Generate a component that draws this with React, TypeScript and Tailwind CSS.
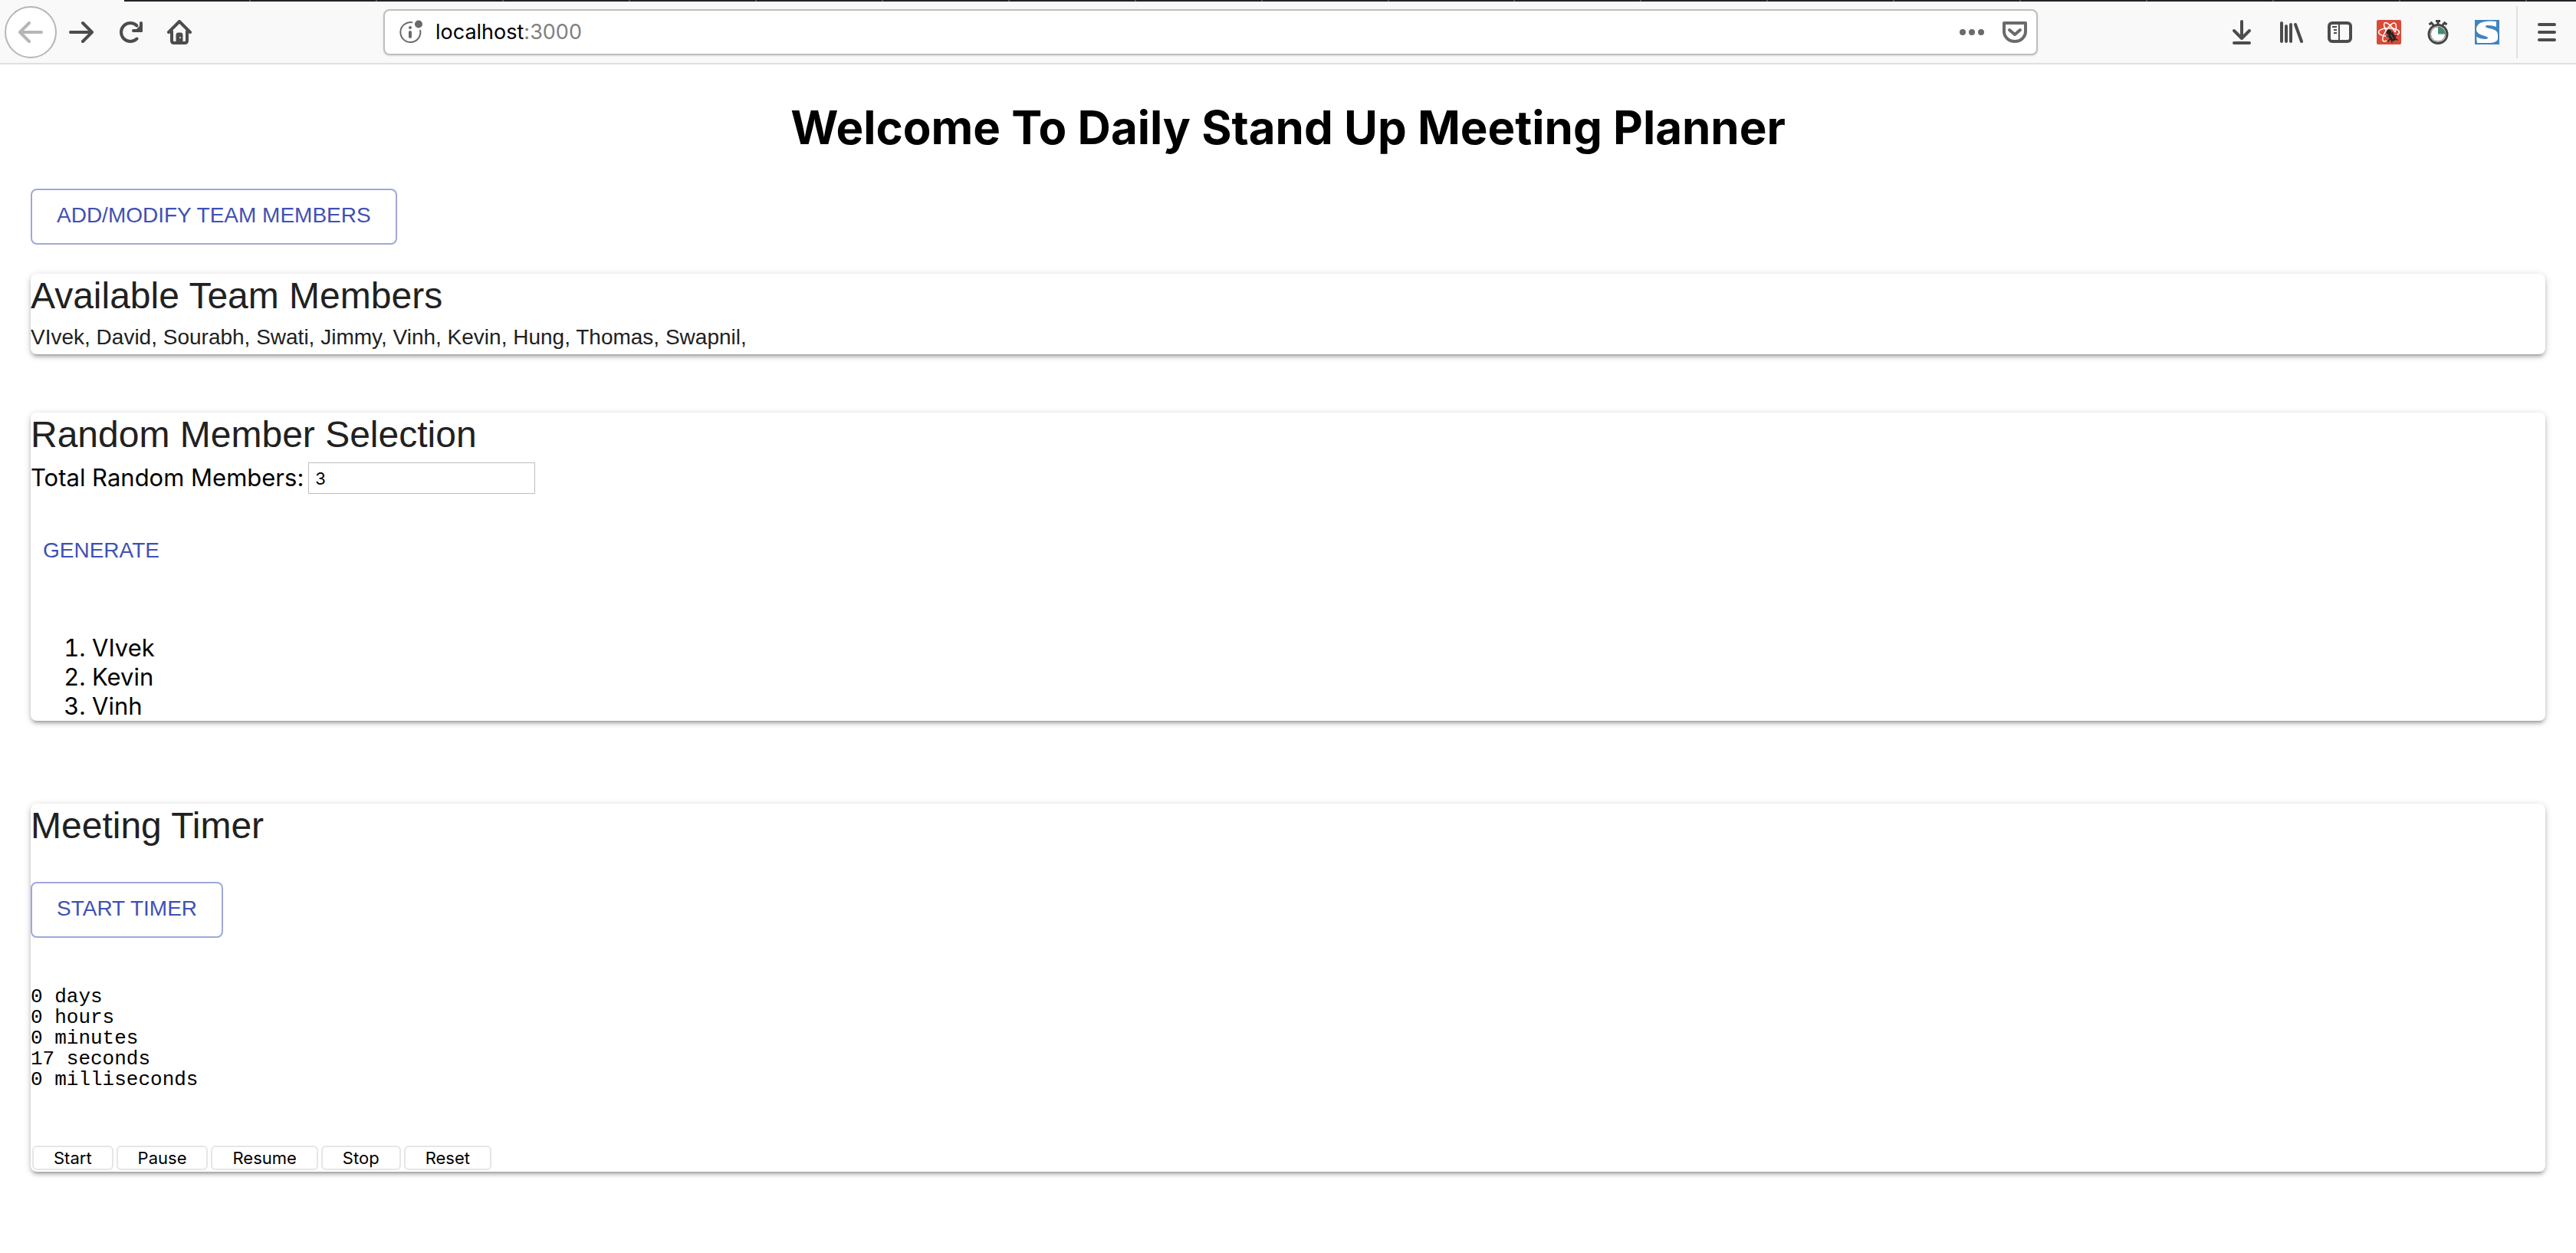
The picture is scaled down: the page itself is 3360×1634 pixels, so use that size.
import React from "react";

const card =
  "rounded-lg bg-white shadow-[0_2px_10px_rgba(0,0,0,0.2),0_4px_4px_rgba(0,0,0,0.14),0_6px_2px_-4px_rgba(0,0,0,0.12)]";
const outlined =
  "flex h-[73px] items-center rounded-lg border-2 border-[#9fa8da] px-8 pb-1 font-['Liberation_Sans',Arial,sans-serif] text-[28px] text-[#3f51b5]";
const title =
  "pb-1.5 font-['Liberation_Sans',Arial,sans-serif] text-[48px] leading-[58px] text-[#212121]";

function BackIcon() {
  return (
    <svg className="size-8" viewBox="0 0 32 32" fill="none" stroke="#b6b6b6" strokeWidth="4" strokeLinecap="round" strokeLinejoin="round">
      <path d="M30 16H3M14 4 2 16l12 12" />
    </svg>
  );
}
function ForwardIcon() {
  return (
    <svg className="size-8" viewBox="0 0 32 32" fill="none" stroke="#4c4c4d" strokeWidth="4" strokeLinecap="round" strokeLinejoin="round">
      <path d="M2 16h27M18 4l12 12-12 12" />
    </svg>
  );
}
function ReloadIcon() {
  return (
    <svg className="size-8" viewBox="0 0 32 32">
      <path d="M24.500 24.500A12 12 0 1 1 24.500 7.500" fill="none" stroke="#4c4c4d" strokeWidth="4" strokeLinecap="round" />
      <path d="M32 4v11q0 1-1 1H20a2 2 0 0 1 0-4h4l4-4V4a2 2 0 0 1 4 0z" fill="#4c4c4d" />
    </svg>
  );
}
function HomeIcon() {
  return (
    <svg className="size-8" viewBox="0 0 32 32" fill="none" stroke="#4c4c4d" strokeLinecap="round" strokeLinejoin="round">
      <path d="M2 16 16 2l14 14" strokeWidth="4" />
      <path d="M6 15v12q0 3 3 3h14q3 0 3-3V15" strokeWidth="4" />
      <path d="M12 30V19q0-2 2-2h4q2 0 2 2v11z" fill="#4c4c4d" strokeWidth="1" />
      <circle cx="17" cy="23" r="1" fill="#f9f9fa" stroke="none" />
    </svg>
  );
}
function InfoIcon() {
  return (
    <svg className="size-8" viewBox="0 0 32 32">
      <path d="M18 3.300A13 13 0 1 0 28 13" fill="none" stroke="#6a6a6a" strokeWidth="2" />
      <circle cx="15" cy="10" r="2" fill="#6a6a6a" />
      <path d="M15 16v6" stroke="#6a6a6a" strokeWidth="4" strokeLinecap="round" />
      <circle cx="26" cy="5.500" r="5" fill="#6a6a6a" />
    </svg>
  );
}
function DotsIcon() {
  return (
    <svg className="size-8" viewBox="0 0 32 32" fill="#6a6a6a">
      <circle cx="4" cy="16" r="4" />
      <circle cx="16" cy="16" r="4" />
      <circle cx="28" cy="16" r="4" />
    </svg>
  );
}
function PocketIcon() {
  return (
    <svg className="size-8" viewBox="0 0 32 32" fill="none" stroke="#6a6a6a" strokeWidth="4" strokeLinecap="round" strokeLinejoin="round">
      <path d="M2 4h28v11a14 13 0 0 1-28 0z" />
      <path d="m9 13 7 6 7-6" />
    </svg>
  );
}
function DownloadIcon() {
  return (
    <svg className="size-8" viewBox="0 0 32 32" fill="none" stroke="#4c4c4d" strokeWidth="4" strokeLinecap="round" strokeLinejoin="round">
      <path d="M16 2v21M6 14l10 10 10-10M6 30h20" />
    </svg>
  );
}
function LibraryIcon() {
  return (
    <svg className="size-8" viewBox="0 0 32 32" fill="none" stroke="#4c4c4d" strokeWidth="4" strokeLinecap="round">
      <path d="M4 4v24M10 8v20M16 6v22M22 6l8 22" />
    </svg>
  );
}
function SidebarIcon() {
  return (
    <svg className="size-8" viewBox="0 0 32 32" fill="none" stroke="#4c4c4d">
      <rect x="2" y="4" width="28" height="24" rx="4" strokeWidth="4" />
      <path d="M15 4v24M6 9h6M8 13h4M8 17h4" strokeWidth="2" />
    </svg>
  );
}
function ReactIcon() {
  return (
    <svg className="size-8" viewBox="0 0 32 32">
      <rect width="32" height="32" rx="2" fill="#db4a38" />
      <g fill="none" stroke="#fff" strokeWidth="1.500">
        <ellipse cx="16" cy="16" rx="13.500" ry="5.500" />
        <path d="M20 23C14 18 8 8 10 4.500S20 8 24 16" />
        <path d="M24 16C27 9 25 3 22 4S12 12 9 20s0 9 4 7" />
      </g>
      <g fill="#222" stroke="#222" strokeLinecap="round">
        <circle cx="16" cy="16" r="3" />
        <ellipse cx="20" cy="22" rx="3.500" ry="5.500" transform="rotate(-35 20 22)" />
        <path d="m13 21 4 1m-2 6 3-4m3-8v4m5 0-4 2m5 4-5-2m-2 5-1-4" strokeWidth="1.500" />
      </g>
      <path d="m18 19 4 6" stroke="#db4a38" strokeWidth="1" />
    </svg>
  );
}
function StopwatchIcon() {
  return (
    <svg className="size-8" viewBox="0 0 32 32">
      <path d="M13 1.500h6M16 2v4M8 4l2 3M24 4l-2 3M4.500 6l4-3M27.500 6l-4-3" stroke="#444" strokeWidth="3" />
      <circle cx="16" cy="18.500" r="12" fill="#fff" stroke="#444" strokeWidth="3" />
      <circle cx="16" cy="18.500" r="9.500" fill="none" stroke="#777" strokeWidth="1" />
      <path d="M16 18.500V9a9.500 9.500 0 0 1 9.500 9.500z" fill="#458b74" />
    </svg>
  );
}
function SIcon() {
  return (
    <svg className="size-8" viewBox="0 0 32 32">
      <rect width="32" height="32" fill="#3f84bf" />
      <path d="M28 2v7c-5-2-14-3-14-.5C14 12 30 10 30 19v5c0 4-5 6-12 6H3l-1-8c6 3 15 4 15 1.500C17 20 2 21 2 12 2 3 14 0 28 2z" fill="#fff" />
    </svg>
  );
}
function MenuIcon() {
  return (
    <svg className="size-8" viewBox="0 0 32 32" stroke="#4c4c4d" strokeWidth="4" strokeLinecap="round">
      <path d="M6 6h20M6 16h20M6 26h20" />
    </svg>
  );
}

function IconButton({ label, children }: { label: string; children: React.ReactNode }) {
  return (
    <button type="button" aria-label={label} className="flex size-16 items-center justify-center">
      {children}
    </button>
  );
}

function BrowserBar() {
  return (
    <header className="border-b-2 border-[#e0e0e1] bg-[#f9f9fa]">
      <div className="ml-[162px] flex h-0.5 bg-[#232027] pr-16">
        {Array.from({ length: 19 }, (_, tab) => (
          <div key={tab} className="h-0.5 flex-1 border-r-2 border-[#55535a]" />
        ))}
      </div>
      <div className="flex h-20 items-center">
        <button type="button" aria-label="Back" className="ml-1.5 flex size-[68px] items-center justify-center rounded-full border-2 border-[#b6b6b6] bg-white">
          <BackIcon />
        </button>
        <IconButton label="Forward"><ForwardIcon /></IconButton>
        <IconButton label="Reload"><ReloadIcon /></IconButton>
        <IconButton label="Home"><HomeIcon /></IconButton>
        <div className="mr-[200px] ml-[234px] flex h-[60px] max-w-[2158px] grow items-center rounded-lg border-2 border-[#bebebe] bg-white pr-3 pl-[18px] shadow-sm">
          <InfoIcon />
          <div role="textbox" aria-label="Address" className="grow pl-4 text-[27px] text-black">
            localhost<span className="text-[#808080]">:3000</span>
          </div>
          <button type="button" aria-label="Page actions"><DotsIcon /></button>
          <button type="button" aria-label="Save to Pocket" className="ml-6"><PocketIcon /></button>
        </div>
        <div className="mr-1.5 ml-auto flex items-center">
          <IconButton label="Downloads"><DownloadIcon /></IconButton>
          <IconButton label="Library"><LibraryIcon /></IconButton>
          <IconButton label="Sidebars"><SidebarIcon /></IconButton>
          <IconButton label="React tools"><ReactIcon /></IconButton>
          <IconButton label="Stopwatch"><StopwatchIcon /></IconButton>
          <IconButton label="S extension"><SIcon /></IconButton>
          <div className="mx-1.5 h-[68px] w-0.5 bg-[#e0e0e1]" />
          <IconButton label="Menu"><MenuIcon /></IconButton>
        </div>
      </div>
    </header>
  );
}

export default function App() {
  return (
    <div className="min-h-screen bg-white font-[Inter,sans-serif] text-black">
      <BrowserBar />
      <main className="px-10 pt-11">
        <h1 className="text-center text-[60px] leading-[76px] font-bold">Welcome To Daily Stand Up Meeting Planner</h1>
        <button type="button" className={`${outlined} mt-[42px]`}>ADD/MODIFY TEAM MEMBERS</button>

        <section className={`${card} mt-[38px] pb-1`}>
          <h2 className={title}>Available Team Members</h2>
          <p className="font-['Liberation_Sans',Arial,sans-serif] text-[28px] leading-[37px] text-[#212121]">
            VIvek, David, Sourabh, Swati, Jimmy, Vinh, Kevin, Hung, Thomas, Swapnil,
          </p>
        </section>

        <section className={`${card} mt-[76px]`}>
          <h2 className={title}>Random Member Selection</h2>
          <div className="flex items-end">
            <label htmlFor="total" className="text-[31px] leading-[42px]">Total Random Members:</label>
            <input id="total" defaultValue="3" className="ml-1.5 h-[41px] w-[296px] border border-[#bebebe] px-2 text-[22px]" />
          </div>
          <button type="button" className="mt-10 flex h-[72px] items-center px-4 pb-1 font-['Liberation_Sans',Arial,sans-serif] text-[28px] text-[#3f51b5]">
            GENERATE
          </button>
          <ol className="mt-[70px] list-decimal pl-20 text-[31px] leading-[38px]">
            <li>VIvek</li>
            <li>Kevin</li>
            <li>Vinh</li>
          </ol>
        </section>

        <section className={`${card} mt-[108px]`}>
          <h2 className={title}>Meeting Timer</h2>
          <button type="button" className={`${outlined} mt-[38px]`}>START TIMER</button>
          <div className="mt-16 font-['Liberation_Mono','Courier_New',monospace] text-[26px] leading-[27px]">
            <p>0 days</p>
            <p>0 hours</p>
            <p>0 minutes</p>
            <p>17 seconds</p>
            <p>0 milliseconds</p>
          </div>
          <div className="mt-[72px] flex gap-1 px-0.5 pb-0.5">
            {["Start", "Pause", "Resume", "Stop", "Reset"].map((name) => (
              <button key={name} type="button" className="h-8 rounded-md border-2 border-[#e6e6e6] px-[26px] text-[22px] leading-7">
                {name}
              </button>
            ))}
          </div>
        </section>
      </main>
    </div>
  );
}
